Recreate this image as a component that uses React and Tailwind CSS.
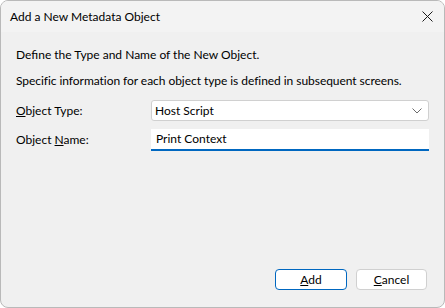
export default function App() {
  return (
    <div
      className="w-[445px] h-[308px] bg-white text-[12px] text-[#000000]"
      style={{ fontFamily: 'Lato, "Liberation Sans", sans-serif' }}
    >
      <div className="w-full h-full flex flex-col border border-[#b9b9b9] rounded-lg overflow-hidden bg-[#f0f0f0]">
        <div className="h-[31px] flex items-center justify-between bg-[#f3f3f3] pl-[9px] pr-[10px]">
          <span className="whitespace-nowrap">Add a New Metadata Object</span>
          <svg width="11" height="11" viewBox="0 0 11 11" className="mr-[1px]">
            <path d="M0.5 0.5 L10.5 10.5 M10.5 0.5 L0.5 10.5" stroke="#1b1b1b" strokeWidth="1" />
          </svg>
        </div>

        <div className="flex-1 flex flex-col px-[15px] pt-[14px]">
          <p className="leading-[17px] whitespace-nowrap">Define the Type and Name of the New Object.</p>
          <p className="leading-[17px] mt-[9px] whitespace-nowrap tracking-[-0.05px]">
            Specific information for each object type is defined in subsequent screens.
          </p>

          <div className="flex items-center mt-[11px] h-[21px]">
            <span className="w-[135px]">
              <u>O</u>bject Type:
            </span>
            <div className="flex-1 h-[21px] flex items-center justify-between bg-white border border-[#d0d0d0] rounded-[3px] pl-[3px] pr-[6px]">
              <span>Host Script</span>
              <svg width="10" height="6" viewBox="0 0 10 6">
                <path d="M0.5 0.5 L5 5 L9.5 0.5" fill="none" stroke="#6b6b6b" strokeWidth="1" />
              </svg>
            </div>
          </div>

          <div className="flex items-center mt-[8px] h-[22px]">
            <span className="w-[135px]">
              Object <u>N</u>ame:
            </span>
            <div className="flex-1 h-[22px] flex items-center bg-white border-b-2 border-[#0067c0] pl-[5px]">
              <span>Print Context</span>
            </div>
          </div>

          <div className="flex-1" />

          <div className="flex justify-end gap-[9px] mb-[17px] mr-[2px]">
            <button className="w-[72px] h-[21px] bg-white border border-[#0067c0] rounded-[4px] text-[12px]">
              <u>A</u>dd
            </button>
            <button className="w-[71px] h-[21px] bg-white border border-[#d0d0d0] rounded-[4px] text-[12px]">
              <u>C</u>ancel
            </button>
          </div>
        </div>
      </div>
    </div>
  );
}
